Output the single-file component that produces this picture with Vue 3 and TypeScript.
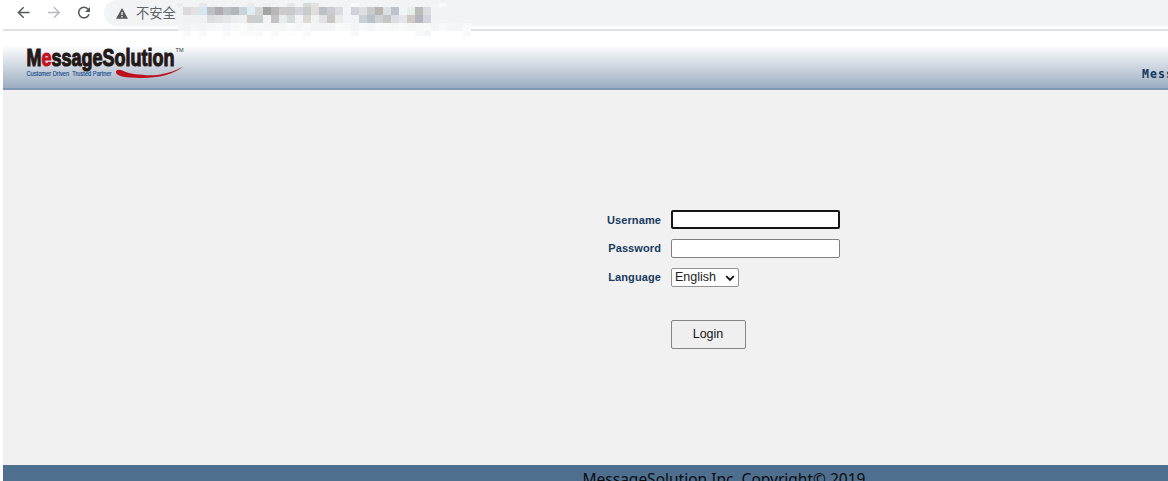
<script setup lang="ts">
import { ref } from 'vue'

interface Cell { x: number; y: number; w: number; h: number; fill: string }

const username = ref('')
const password = ref('')
const language = ref('English')

const bands: { y: number; h: number; colors: string }[] = [
  { y: 3, h: 4, colors: 'f1f3f4 f1f3f4 e5e7e9 f0f2f3 f1f3f4 f1f3f4 f1f3f4 f1f3f4 e9ebed f1f3f4 eceeef f1f3f4 f1f3f4 e5e8e9 f1f3f4 d7dad8 e3e2df f1f3f4 f1f3f4 f1f3f4 f1f3f4 f8fafb f1f3f4 f1f3f4 f1f3f4 f1f3f4 f1f3f4 f1f3f4 f1f3f4 f1f3f4 f1f3f4 f2f4f5 f8f9fa' },
  { y: 7, h: 8, colors: 'd9d9db e3e0df d4e7f1 bebfc4 aeacae bdc0c4 b2b7bc c7d2d9 dfecf3 d4d5d4 a1a4a2 b9b6b7 cccbcc c8caca d0d5df c9cbca e0deda bcbfc3 caccd1 dadbdf f1f3f4 cfd2d9 dddfdf c5caca b8b5b0 dde0e2 bac3cb f1f3f4 e6eeeb b9bdba dbdddd f1f3f4 f1f3f4' },
  { y: 15, h: 8, colors: 'eff1f3 eff1f3 eff1f4 dcdde0 dfe2e5 e4e6ea ebedef edf0ef d0ccc7 caced0 f0f2f3 c4c3c4 e8eaec d6dad9 f0f2f3 dcd9d4 eff1f2 e1e2e3 cbc7c7 eaebeb f1f3f4 f1f3f4 c9cfd3 bac1c7 cdd2d6 c4c5c4 dadde3 e4e7e7 d0c9c4 b3b6bf d1d5dd f1f3f4 f1f3f4' },
  { y: 23, h: 8, colors: 'f1f3f4 f4f6f7 f3f5f6 f5f7f8 f6f8f9 f4f6f7 f7f9f9 f9fafa f4f6f6 f5f7f8 f3f5f6 f5f7f7 f4f6f6 f8fafa f3f5f6 f7f9f9 f3f4f5 f3f4f5 f3f4f5 f9fbfb f6f8f8 f2f4f5 f7f9f9 f3f5f6 f9fbfa f7f9f9 f5f7f7 f8fafa f5f7f7 f7f9f9 f8fafa f2f4f6 f8fafa' },
  { y: 31, h: 5, colors: 'f7f9fa ffffff f7f9fa ffffff ffffff f7f9fa ffffff fafbfb fbfbfb f7f9fa ffffff f7f9fa ffffff fbfcfc ffffff f7f9fa ffffff ffffff ffffff ffffff ffffff f5f7f8 ffffff ffffff ffffff ffffff ffffff ffffff ffffff f7f9fa f3f5f7 ffffff ffffff' },
]

const cells: Cell[] = bands.flatMap((b) =>
  b.colors.split(' ').map((c, i) => ({ x: 5 + i * 8, y: b.y, w: 8, h: b.h, fill: '#' + c })),
)
for (let i = 33; i < 36; i++) {
  cells.push({ x: 5 + i * 8, y: 23, w: 8, h: 8, fill: i === 35 ? '#f8fafa' : '#f3f5f6' })
  cells.push({ x: 5 + i * 8, y: 31, w: 8, h: 5, fill: i === 35 ? '#f7f9fa' : '#ffffff' })
}
cells.push({ x: 0, y: 3, w: 5, h: 4, fill: '#e8eaeb' })
cells.push({ x: 0, y: 15, w: 5, h: 16, fill: '#f3f4f5' })
</script>

<template>
  <div class="window">
    <div class="toolbar">
      <svg class="nav" width="100" height="26" viewBox="0 0 100 26" fill="none" stroke-width="1.5">
        <path d="M29.5 12.5H18.5M23.7 7.2L18.4 12.5L23.7 17.8" stroke="#55585c" />
        <path d="M48 12.5H59M53.9 7.2L59.2 12.5L53.9 17.8" stroke="#b9bbbe" />
        <path d="M88.2 9.3A5.3 5.3 0 1 0 89 14.2" stroke="#55585c" />
        <path d="M90 7V12H85Z" fill="#55585c" />
      </svg>
      <div class="address">
        <svg class="warn" width="12" height="11" viewBox="0 0 12 11">
          <path d="M6 0L12 10.7H0Z" fill="#55585c" />
          <path d="M6 4V7M6 8V9.4" stroke="#f1f3f4" stroke-width="1.3" />
        </svg>
        <span>不安全</span>
      </div>
      <svg class="mosaic" width="293" height="36" viewBox="0 0 293 36" shape-rendering="crispEdges">
        <rect v-for="(c, i) in cells" :key="i" :x="c.x" :y="c.y" :width="c.w" :height="c.h" :fill="c.fill" />
      </svg>
    </div>

    <div class="page">
      <header class="banner">
        <svg class="logo" width="190" height="57" viewBox="0 0 190 57">
          <text class="brand" x="23.5" y="35" textLength="148" lengthAdjust="spacingAndGlyphs">M<tspan class="red">e</tspan>ssageSolution</text>
          <text class="tm" x="172.5" y="21" textLength="8" lengthAdjust="spacingAndGlyphs">TM</text>
          <text class="motto" x="23.5" y="45.3" textLength="85" lengthAdjust="spacingAndGlyphs">Customer Driven&#160; Trusted Partner</text>
          <path d="M180 35.5C171 41 157 45 143 44.2C133 43.5 125 42.5 120 39.8C116 38.2 112.5 38.5 113 41.5C114 45.5 123 46.8 137 47C155 47.2 171 43.5 180 35.5Z" fill="#bd121d" />
        </svg>
        <span class="product">MessageSolution</span>
      </header>

      <main class="content">
        <form class="login" @submit.prevent>
          <label for="user">Username</label>
          <input id="user" v-model="username" class="field focused" type="text" />
          <label for="pass">Password</label>
          <input id="pass" v-model="password" class="field" type="password" />
          <label>Language</label>
          <div class="select">
            <span>{{ language }}</span>
            <svg width="10" height="7" viewBox="0 0 10 7"><path d="M1.2 1.2L5 5L8.8 1.2" fill="none" stroke="#111" stroke-width="1.8" /></svg>
          </div>
          <button class="submit" type="submit">Login</button>
        </form>
      </main>

      <footer class="footer"><span>MessageSolution Inc. Copyright© 2019</span></footer>
    </div>
  </div>
</template>

<style>
body { margin: 0; overflow: hidden; }
</style>

<style scoped>
.window {
  width: 1168px;
  height: 481px;
  overflow: hidden;
  display: flex;
  flex-direction: column;
  background: #fff;
  font-family: "Liberation Sans", "Noto Sans CJK SC", sans-serif;
}
.toolbar {
  position: relative;
  flex: none;
  display: flex;
  align-items: flex-start;
  height: 29px;
  margin-left: 3px;
  border-bottom: 2px solid #dfe0e2;
}
.nav { flex: none; margin-left: -3px; }
.address {
  flex: 1;
  display: flex;
  align-items: center;
  box-sizing: border-box;
  height: 26px;
  margin-left: 4px;
  padding-left: 12px;
  background: #f1f3f4;
  border-radius: 13px 0 0 13px;
  color: #606468;
  font: 13.3px/26px "Noto Sans CJK SC", sans-serif;
}
.warn { margin-right: 8px; }
.mosaic { position: absolute; left: 175px; top: 0; }
.page {
  flex: 1;
  display: flex;
  flex-direction: column;
  margin-left: 3px;
  background: #f1f1f1;
}
.banner {
  flex: none;
  display: flex;
  align-items: flex-start;
  justify-content: space-between;
  height: 57px;
  border-bottom: 2px solid #7f98b4;
  background: linear-gradient(#fff 0, #fff 14px, #d6dde5 32px, #9badc1 57px);
}
.logo { flex: none; }
.brand {
  font: bold 23.5px "Liberation Sans", sans-serif;
  fill: #231815;
  stroke: #231815;
  stroke-width: 1.1px;
}
.red { fill: #c7101e; stroke: #c7101e; }
.tm { font: 5.5px "Liberation Sans", sans-serif; fill: #333; }
.motto {
  font: 6.5px "Liberation Sans", sans-serif;
  fill: #174a8c;
  stroke: #174a8c;
  stroke-width: 0.15px;
}
.product {
  width: 26px;
  margin-top: 36px;
  overflow: hidden;
  white-space: nowrap;
  color: #12365d;
  font: bold 11.5px/14px "DejaVu Sans Mono", monospace;
  letter-spacing: 1.1px;
}
.content { flex: 1; }
.login {
  display: grid;
  grid-template-columns: 58px 169px;
  grid-template-rows: 19px 19px 19px 29px;
  column-gap: 10px;
  row-gap: 9.6px;
  width: 237px;
  margin: 120.4px 0 0 600px;
}
label {
  align-self: center;
  margin-top: 1px;
  text-align: right;
  white-space: nowrap;
  color: #173a60;
  font: bold 11px/13px "Liberation Sans", sans-serif;
  letter-spacing: 0.1px;
}
.field {
  box-sizing: border-box;
  width: 169px;
  height: 19px;
  margin: 0;
  padding: 1px 3px;
  border: 1px solid #808080;
  border-radius: 2px;
  background: #fff;
  outline: none;
  font: 13px "Liberation Sans", sans-serif;
}
.focused { border: 2px solid #151515; }
.select {
  display: flex;
  align-items: center;
  justify-content: space-between;
  box-sizing: border-box;
  width: 68px;
  height: 19px;
  padding: 0 3px 0 3px;
  border: 1px solid #929292;
  border-radius: 2px;
  background: #fff;
  color: #222;
  font: 12.5px/17px "Liberation Sans", sans-serif;
}
.select svg { margin-top: 2px; }
.submit {
  grid-column: 2;
  box-sizing: border-box;
  width: 75px;
  height: 29px;
  margin-top: 23.8px;
  padding: 0 1px 0 0;
  border: 1px solid #858585;
  border-radius: 2px;
  background: #efefef;
  color: #151515;
  font: 12.5px "Liberation Sans", sans-serif;
}
.footer {
  flex: none;
  height: 16px;
  overflow: hidden;
  background: #4f6f8e;
  color: #0b0e12;
  font: 15.5px/28px "Noto Sans", sans-serif;
}
.footer span { margin-left: 579.5px; white-space: nowrap; }
</style>
